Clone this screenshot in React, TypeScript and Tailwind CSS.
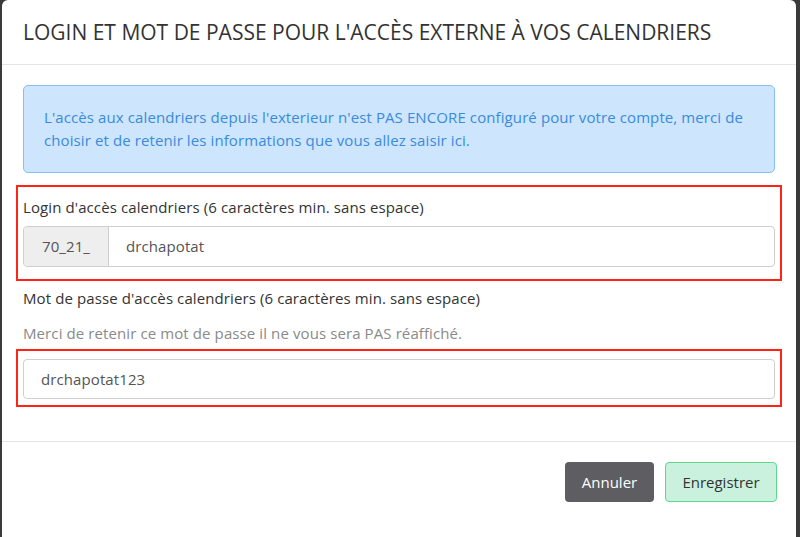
export default function App() {
  return (
    <div className="flex min-h-[537px] bg-[#3a3a3a] pl-[2px] pr-[4px] font-['Open_Sans',sans-serif] text-[#333]">
      <div className="flex-1 rounded-t-[6px] bg-white">
        <div className="flex h-[65px] items-center border-b border-[#e5e5e5] px-[21px]">
          <h1 className="pt-[2px] text-[21px] font-normal text-[#333]">
            LOGIN ET MOT DE PASSE POUR L'ACCÈS EXTERNE À VOS CALENDRIERS
          </h1>
        </div>

        <div className="px-[14px] pt-[20px] pb-[34px] text-[15px] tracking-[0.1px]">
          <div className="mx-[7px] rounded-[5px] border border-[#86bff4] bg-[#cde5fd] px-[20px] py-[20px] leading-[23px] text-[#3a8bdc]">
            L'accès aux calendriers depuis l'exterieur n'est PAS ENCORE configuré pour votre compte, merci de
            choisir et de retenir les informations que vous allez saisir ici.
          </div>

          <div className="mt-[12px] border-2 border-[#ff2414] px-[5px] pt-[10px] pb-[12px]">
            <label className="mb-[9px] block leading-[20px]">
              Login d'accès calendriers (6 caractères min. sans espace)
            </label>
            <div className="flex h-[41px] rounded-[4px] border border-[#cfcfcf]">
              <span className="flex w-[85px] items-center justify-center rounded-l-[4px] border-r border-[#cfcfcf] bg-[#eeeeee] text-[#555]">
                70_21_
              </span>
              <span className="flex flex-1 items-center px-[17px] text-[#555]">drchapotat</span>
            </div>
          </div>

          <label className="mt-[7px] block px-[7px] leading-[20px]">
            Mot de passe d'accès calendriers (6 caractères min. sans espace)
          </label>
          <p className="mt-[15px] px-[7px] leading-[20px] text-[#8a8a8a]">
            Merci de retenir ce mot de passe il ne vous sera PAS réaffiché.
          </p>

          <div className="mt-[6px] border-2 border-[#ff2414] px-[5px] pt-[8px] pb-[6px]">
            <div className="flex h-[40px] items-center rounded-[4px] border border-[#cfcfcf] px-[17px] text-[#555]">
              drchapotat123
            </div>
          </div>
        </div>

        <div className="flex justify-end gap-[11px] border-t border-[#e5e5e5] px-[19px] pt-[20px]">
          <button className="h-[40px] w-[89px] rounded-[4px] bg-[#5e5d62] text-[15px] text-white">
            Annuler
          </button>
          <button className="h-[40px] w-[112px] rounded-[4px] border border-[#5cd98f] bg-[#caf1dd] text-[15px] text-[#333]">
            Enregistrer
          </button>
        </div>
      </div>
    </div>
  );
}
